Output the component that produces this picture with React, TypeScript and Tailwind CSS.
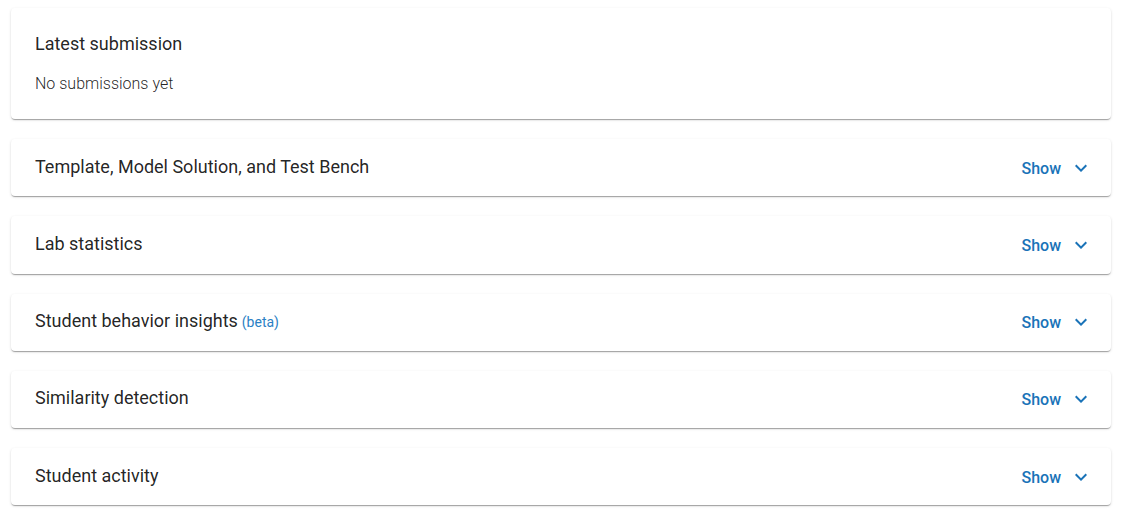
import React from 'react';

const sections: { title: string; beta?: boolean }[] = [
    { title: 'Template, Model Solution, and Test Bench' },
    { title: 'Lab statistics' },
    { title: 'Student behavior insights', beta: true },
    { title: 'Similarity detection' },
    { title: 'Student activity' },
];

const Chevron = () => (
    <svg viewBox="0 0 24 24" className="w-6 h-6 fill-[#1a73b8]">
        <path d="M16.59 8.59 12 13.17 7.41 8.59 6 10l6 6 6-6z" />
    </svg>
);

const Paper: React.FC<{ children: React.ReactNode; className?: string }> = ({ children, className = '' }) => (
    <div className={`bg-white rounded-[4px] shadow-[0_2px_1px_-1px_rgba(0,0,0,0.2),0_1px_1px_0_rgba(0,0,0,0.14),0_1px_3px_0_rgba(0,0,0,0.12)] ${className}`}>
        {children}
    </div>
);

export default function App() {
    return (
        <div className="min-h-screen bg-white pt-2 pl-[11px] font-['Roboto',sans-serif] text-[rgba(0,0,0,0.87)]">
            <div className="w-[1100px] flex flex-col gap-5">
                <Paper className="h-[111px] px-6 pt-[23px]">
                    <h2 className="text-[18px] leading-[26px]">Latest submission</h2>
                    <p className="mt-[15px] text-[16px] font-light leading-6">No submissions yet</p>
                </Paper>
                {sections.map((s) => (
                    <Paper key={s.title} className="h-[57.25px] pl-6 pr-[18px] flex items-center justify-between">
                        <div className="text-[18px] leading-[26px] -mt-[2px]">
                            {s.title}
                            {s.beta && <span className="ml-1 text-[14px] text-[#2a7fc4]">(beta)</span>}
                        </div>
                        <button className="mt-[2px] flex items-center gap-[8px] text-[16px] font-medium text-[#1a73b8]">
                            Show
                            <span className="-mt-[2px]"><Chevron /></span>
                        </button>
                    </Paper>
                ))}
            </div>
        </div>
    );
}
